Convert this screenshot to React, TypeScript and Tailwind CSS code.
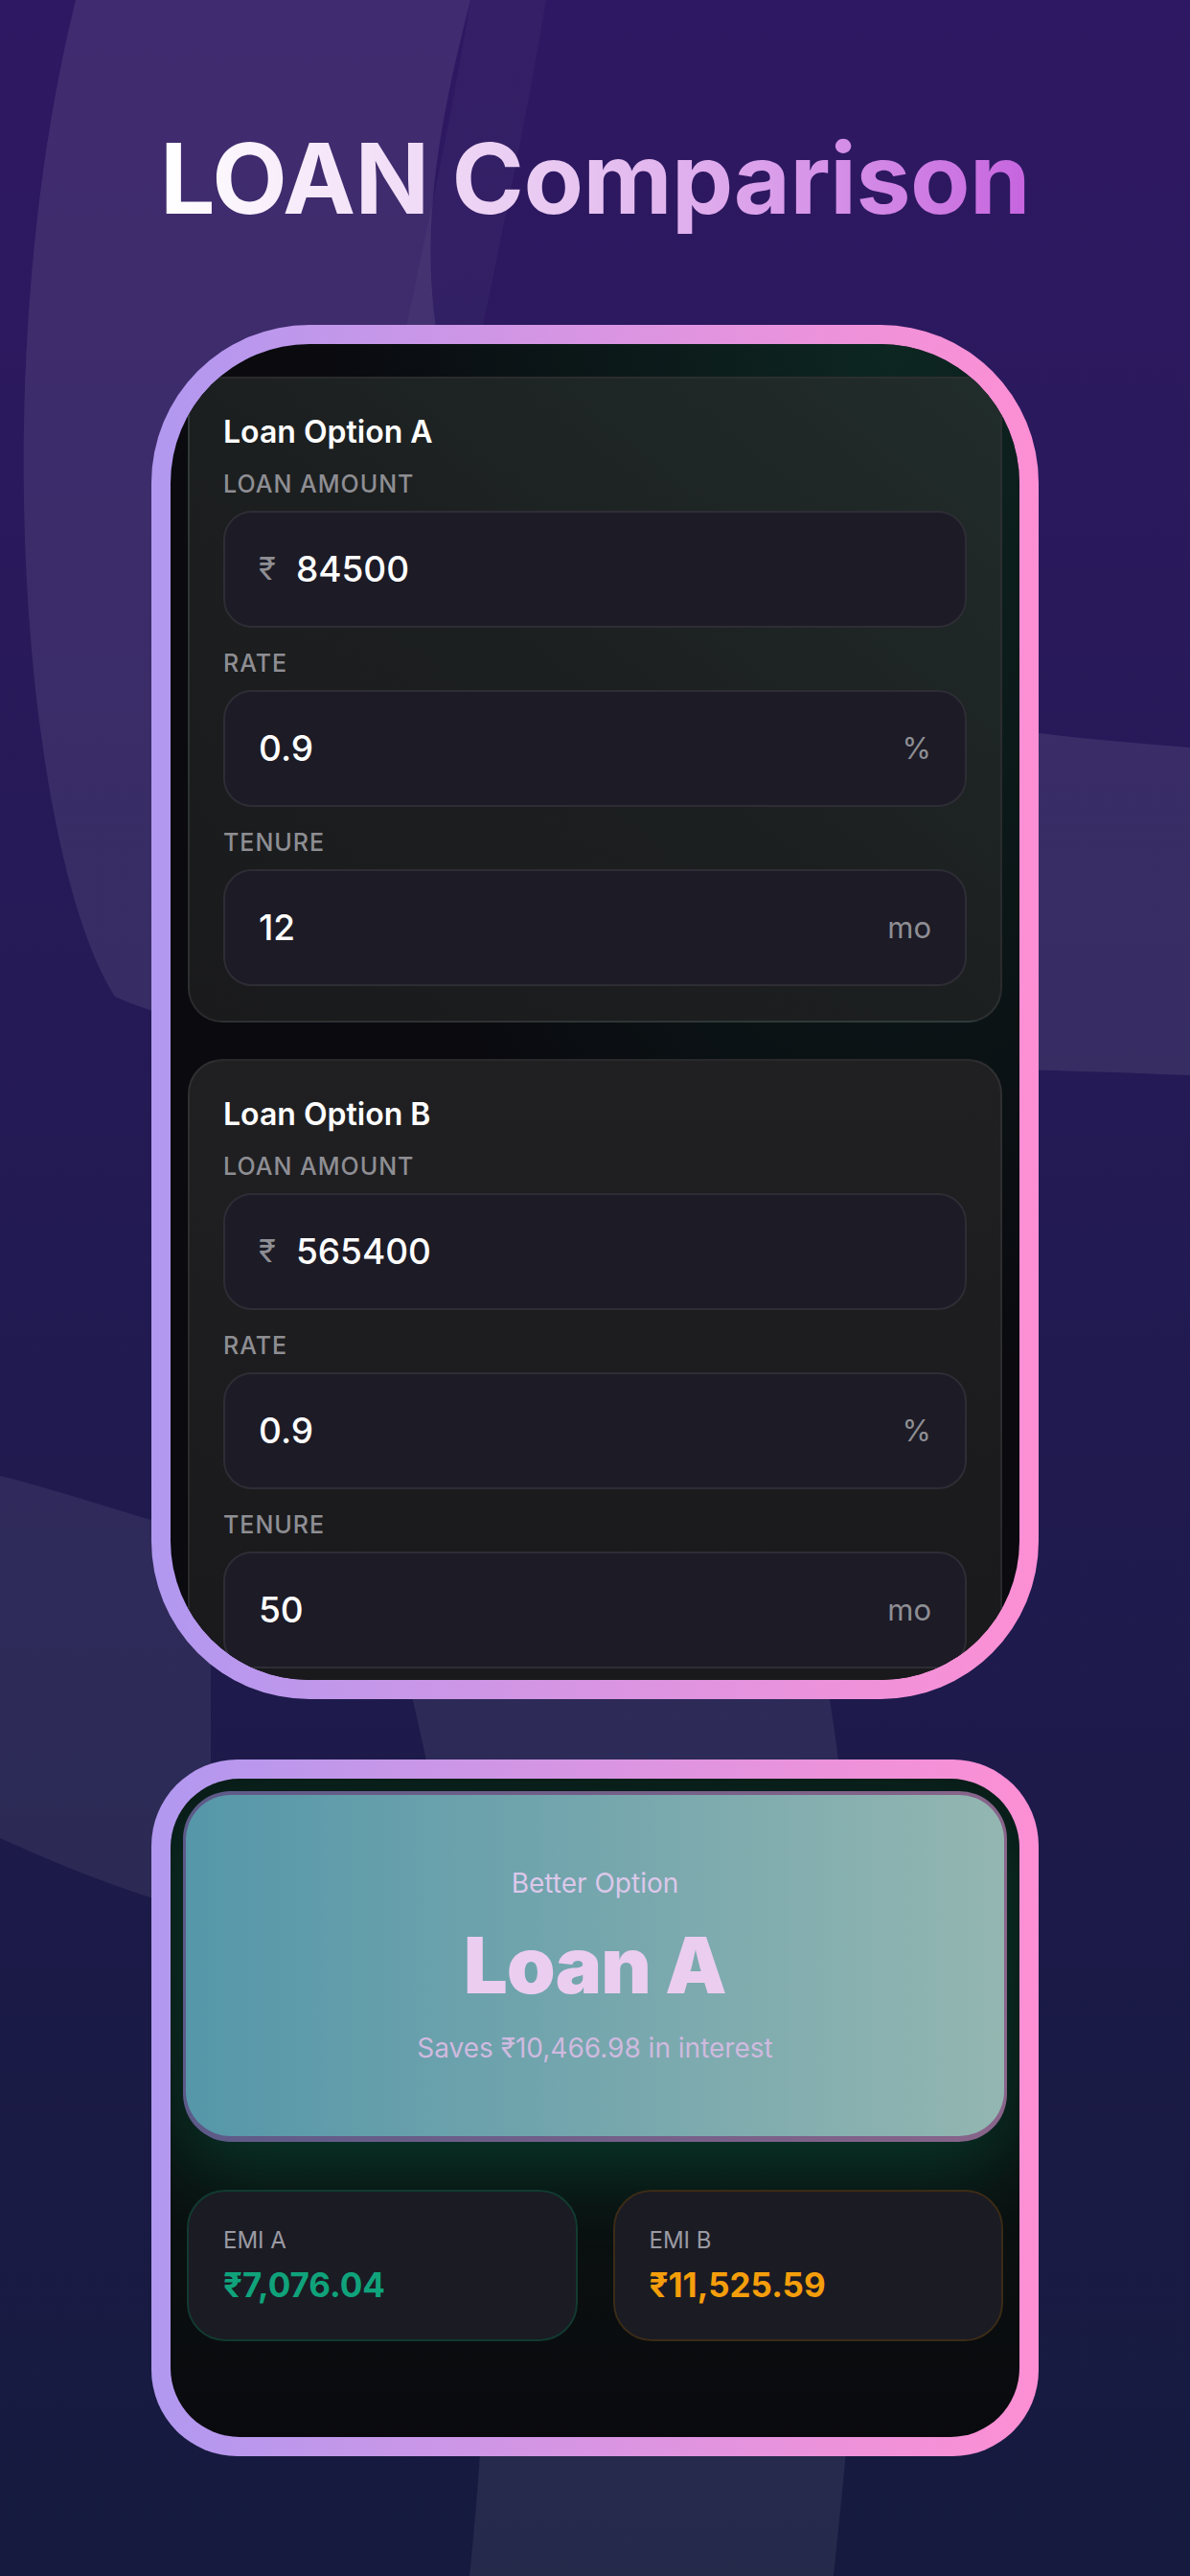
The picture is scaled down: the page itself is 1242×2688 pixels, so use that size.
import React from "react";

type FieldProps = { label: string; value: string; prefix?: string; suffix?: string };

function Field({ label, value, prefix, suffix }: FieldProps) {
  return (
    <div className="flex flex-col">
      <div className="text-[25px] leading-[30px] font-medium uppercase tracking-[0.04em] text-[#8e8e93]">{label}</div>
      <div className="mt-[13px] flex h-[122px] items-center rounded-[30px] border-2 border-[#2e2d35] bg-[#1c1b26] px-[35px]">
        {prefix && <span className="mr-[21px] text-[33px] text-[#8e8e93]">{prefix}</span>}
        <span className="text-[37px] font-medium text-white">{value}</span>
        {suffix && <span className="ml-auto text-[31px] text-[#8e8e93]">{suffix}</span>}
      </div>
    </div>
  );
}

type CardProps = { title: string; amount: string; rate: string; tenure: string; tinted?: boolean };

function LoanCard({ title, amount, rate, tenure, tinted }: CardProps) {
  const bg = tinted
    ? "rounded-[36px] border-2 border-white/[0.07] bg-gradient-to-bl from-[#212d2b] via-[#1c1f20] to-[#1a1a1c] px-[35px] pt-[36px] pb-[36px]"
    : "rounded-[36px] border-2 border-white/[0.07] bg-gradient-to-b from-[#202023] to-[#19191b] px-[35px] pt-[36px] pb-[36px]";
  return (
    <div className={bg}>
      <div className="mb-[19px] text-[32px] leading-[40px] font-semibold text-white">{title}</div>
      <div className="flex flex-col gap-[22px]">
        <Field label="Loan Amount" value={amount} prefix="₹" />
        <Field label="Rate" value={rate} suffix="%" />
        <Field label="Tenure" value={tenure} suffix="mo" />
      </div>
    </div>
  );
}

function EmiBox({ label, value, variant }: { label: string; value: string; variant: "a" | "b" }) {
  const box =
    variant === "a"
      ? "flex h-[158px] flex-col justify-center rounded-[40px] border-2 border-[#123a30] bg-[#1b1b24] px-[36px]"
      : "flex h-[158px] flex-col justify-center rounded-[40px] border-2 border-[#3b2b16] bg-[#1b1b24] px-[36px]";
  const val =
    variant === "a"
      ? "mt-[10px] text-[35px] leading-[42px] font-bold text-[#10a37b]"
      : "mt-[10px] text-[35px] leading-[42px] font-bold text-[#f59e0b]";
  return (
    <div className={box}>
      <div className="text-[24px] leading-[30px] text-[#9a9aa2]">{label}</div>
      <div className={val}>{value}</div>
    </div>
  );
}

export default function App() {
  return (
    <div className="relative min-h-[2688px] w-full overflow-hidden bg-gradient-to-b from-[#2f1863] via-[#221a52] to-[#151a3e] font-['Inter','Liberation_Sans',sans-serif]">
      <svg
        className="pointer-events-none absolute inset-0 h-full w-full"
        viewBox="0 0 1242 2688"
        preserveAspectRatio="none"
      >
        <path
          d="M 79 0 L 491 0 C 440 200 400 420 600 620 C 800 740 1050 765 1242 780 L 1242 1122 C 700 1100 300 1120 120 1040 C 30 900 -20 400 79 0 Z"
          fill="#ffffff"
          fillOpacity="0.085"
        />
        <path
          d="M 491 0 L 570 0 C 545 150 520 260 500 360 L 420 360 C 445 240 470 130 491 0 Z"
          fill="#ffffff"
          fillOpacity="0.03"
        />
        <path
          d="M 0 1540 C 60 1555 120 1575 220 1605 L 220 2000 C 120 1970 60 1945 0 1918 Z"
          fill="#ffffff"
          fillOpacity="0.07"
        />
        <path
          d="M 400 1650 L 845 1650 C 930 2100 900 2400 870 2688 L 490 2688 C 520 2400 520 2100 400 1650 Z"
          fill="#ffffff"
          fillOpacity="0.07"
        />
      </svg>

      <div className="relative flex flex-col items-center">
        <h1 className="mt-[126px] bg-gradient-to-r from-white via-[#e6c2f0] to-[#c664df] bg-clip-text text-[102px] leading-[120px] font-bold tracking-[-0.005em] text-transparent">
          LOAN Comparison
        </h1>

        <div className="mt-[93px] h-[1434px] w-[926px] rounded-[165px] bg-gradient-to-r from-[#b198f0] to-[#fd8fd4] p-[20px]">
          <div className="relative h-full w-full overflow-hidden rounded-[145px] bg-[#0a0a0f]">
            <div className="absolute inset-0 bg-[radial-gradient(ellipse_at_85%_0%,rgba(14,48,40,0.75),transparent_55%)]" />
            <div className="relative flex flex-col gap-[38px] px-[18px] pt-[34px]">
              <LoanCard title="Loan Option A" amount="84500" rate="0.9" tenure="12" tinted />
              <LoanCard title="Loan Option B" amount="565400" rate="0.9" tenure="50" />
            </div>
          </div>
        </div>

        <div className="mt-[63px] h-[727px] w-[926px] rounded-[90px] bg-gradient-to-r from-[#b198f0] to-[#fd8fd4] p-[20px]">
          <div className="relative h-full w-full overflow-hidden rounded-[72px] bg-gradient-to-b from-[#0a1a17] via-[#0a1411] to-[#0a0a0e]">
            <div className="relative flex flex-col pt-[13px]">
              <div className="mx-[13px] rounded-[50px] bg-gradient-to-r from-[#5c5a88] to-[#88648a] px-[3px] pt-[4px] pb-[6px] shadow-[0_30px_80px_rgba(6,95,70,0.45)]">
                <div className="flex h-[356px] flex-col items-center justify-center rounded-[47px] bg-gradient-to-r from-[#5597a9] to-[#93b6b1]">
                  <div className="text-[28px] leading-[34px] text-[#dcc8ea]">Better Option</div>
                  <div className="mt-[24px] text-[81px] leading-[90px] font-black tracking-[-0.01em] text-[#ebcdf0]">Loan A</div>
                  <div className="mt-[24px] text-[28px] leading-[34px] text-[#cfbadf]">Saves ₹10,466.98 in interest</div>
                </div>
              </div>
              <div className="mx-[17px] mt-[50px] grid grid-cols-2 gap-[37px]">
                <EmiBox label="EMI A" value="₹7,076.04" variant="a" />
                <EmiBox label="EMI B" value="₹11,525.59" variant="b" />
              </div>
            </div>
          </div>
        </div>
      </div>
    </div>
  );
}
